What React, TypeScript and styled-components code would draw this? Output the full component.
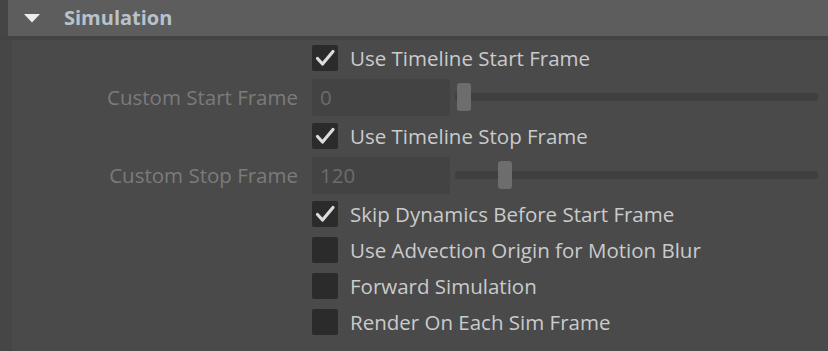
import React from 'react';
import styled, { createGlobalStyle } from 'styled-components';

const GlobalStyle = createGlobalStyle`
  html, body {
    margin: 0;
    padding: 0;
    background: #4a4a4a;
  }
  body {
    font-family: 'Open Sans', 'Noto Sans', sans-serif;
  }
`;

type Row =
  | { kind: 'check'; label: string; checked: boolean }
  | { kind: 'slider'; label: string; value: number };

const rows: Row[] = [
  { kind: 'check', label: 'Use Timeline Start Frame', checked: true },
  { kind: 'slider', label: 'Custom Start Frame', value: 0 },
  { kind: 'check', label: 'Use Timeline Stop Frame', checked: true },
  { kind: 'slider', label: 'Custom Stop Frame', value: 120 },
  { kind: 'check', label: 'Skip Dynamics Before Start Frame', checked: true },
  { kind: 'check', label: 'Use Advection Origin for Motion Blur', checked: false },
  { kind: 'check', label: 'Forward Simulation', checked: false },
  { kind: 'check', label: 'Render On Each Sim Frame', checked: false },
];

// slider range in frames, and the usable travel of the thumb in px
const SLIDER_MAX = 1000;
const THUMB_TRAVEL = 345;

const CheckBox = ({ checked }: { checked: boolean }) => (
  <Box>
    {checked && (
      <svg width="26" height="26" viewBox="0 0 26 26">
        <polyline
          points="5.5,13.5 10.5,19 21,6.5"
          fill="none"
          stroke="#dcdcdc"
          strokeWidth="3.2"
          strokeLinecap="round"
          strokeLinejoin="round"
        />
      </svg>
    )}
  </Box>
);

export default function App() {
  return (
    <>
      <GlobalStyle />
      <Frame>
        <HeaderWrap>
          <Header>
            <svg width="16" height="9" viewBox="0 0 16 9">
              <polygon points="0,0 16,0 8,8.5" fill="#ececec" />
            </svg>
            <Title>Simulation</Title>
          </Header>
        </HeaderWrap>
        <Body>
          <Rows>
            {rows.map((row) =>
              row.kind === 'check' ? (
                <CheckRow key={row.label}>
                  <span />
                  <Control>
                    <CheckBox checked={row.checked} />
                    <CheckLabel>{row.label}</CheckLabel>
                  </Control>
                </CheckRow>
              ) : (
                <SliderRow key={row.label}>
                  <FieldLabel>{row.label}</FieldLabel>
                  <Control>
                    <Field>{row.value}</Field>
                    <Slider>
                      <Track />
                      <Thumb
                        style={{ left: `${2 + (row.value / SLIDER_MAX) * THUMB_TRAVEL}px` }}
                      />
                    </Slider>
                  </Control>
                </SliderRow>
              )
            )}
          </Rows>
        </Body>
      </Frame>
    </>
  );
}

const Frame = styled.div`
  width: 828px;
  height: 351px;
  overflow: hidden;
  background: #4a4a4a;
`;

const HeaderWrap = styled.div`
  background: #454545;
  padding-left: 8px;
  border-bottom: 4px solid #444444;
`;

const Header = styled.div`
  height: 36px;
  background: #5d5d5d;
  display: flex;
  align-items: center;
  padding-left: 16px;
  gap: 24px;
`;

const Title = styled.span`
  font-family: 'Open Sans', sans-serif;
  font-weight: 700;
  font-size: 20px;
  color: #b9c2ca;
  margin-top: -1px;
`;

const Body = styled.div`
  display: flex;
  border-left: 12px solid #464646;
  height: 100%;
`;

const Rows = styled.div`
  display: flex;
  flex-direction: column;
  flex: 1;
  padding-right: 10px;
`;

const CheckRow = styled.div`
  display: grid;
  grid-template-columns: 286px 1fr;
  height: 36px;
  align-items: center;
`;

const SliderRow = styled(CheckRow)`
  height: 42px;
`;

const Control = styled.div`
  display: flex;
  align-items: center;
  margin-left: 14px;
`;

const Box = styled.div`
  width: 26px;
  height: 26px;
  border-radius: 2px;
  background: #2b2b2b;
  flex: none;
  svg {
    display: block;
  }
`;

const CheckLabel = styled.span`
  margin-left: 12px;
  font-size: 20.5px;
  color: #c9cbcd;
  white-space: nowrap;
`;

const FieldLabel = styled.span`
  text-align: right;
  font-size: 20.5px;
  color: #7b7b7b;
  white-space: nowrap;
`;

const Field = styled.div`
  width: 138px;
  height: 37px;
  box-sizing: border-box;
  border-radius: 2px;
  background: #434343;
  padding-left: 8px;
  display: flex;
  align-items: center;
  font-size: 20.5px;
  color: #6c6c6c;
  flex: none;
`;

const Slider = styled.div`
  position: relative;
  flex: 1;
  height: 28px;
  margin-left: 5px;
  display: flex;
  align-items: center;
`;

const Track = styled.div`
  width: 100%;
  height: 8px;
  border-radius: 3px;
  background: #3f3f3f;
`;

const Thumb = styled.div`
  position: absolute;
  top: 0;
  width: 14px;
  height: 28px;
  border-radius: 3px;
  background: #6d6d6d;
`;
